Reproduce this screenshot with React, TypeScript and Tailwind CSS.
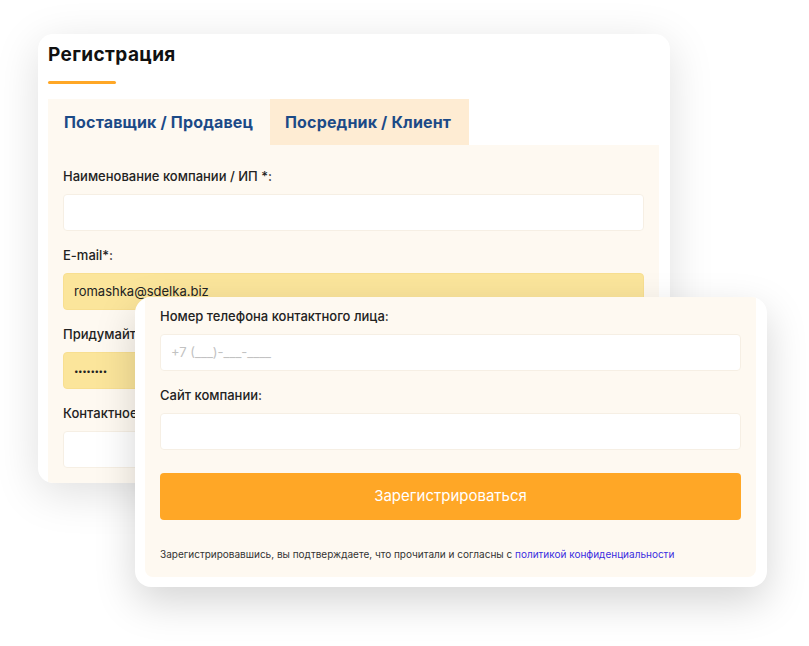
const font = { fontFamily: "Inter, 'Open Sans', sans-serif" };

const Field = ({ label, value, tone = "white", muted = false, dots = false }: { label: string; value?: string; tone?: "white" | "yellow"; muted?: boolean; dots?: boolean }) => (
  <div className="flex flex-col">
    <label className="h-4 text-[13px] leading-4 font-medium text-[#222]">{label}</label>
    <div
      className={
        "mt-[10px] h-[37px] rounded-[4px] border flex items-center px-[10px] " +
        (dots ? "text-[8px] tracking-[-0.05em] " : "text-[13px] ") +
        (tone === "yellow" ? "bg-[#fbe59b] border-[#f8df91]" : "bg-white border-[#f6efe4]") +
        (muted ? " text-[#c2c2c2]" : " text-[#222]")
      }
    >
      {value}
    </div>
  </div>
);

const BackCard = () => (
  <div className="ml-[38px] mt-[34px] w-[632px] h-[449px] bg-white rounded-[15px] overflow-hidden shadow-[0_10px_45px_rgba(0,0,0,0.13)] pl-[10px] pr-[11px] flex flex-col">
    <h2 className="mt-[10px] h-[22px] text-[19px] leading-[22px] tracking-[0.02em] font-bold text-[#111]">Регистрация</h2>
    <div className="mt-[15px] w-[68px] h-[3px] bg-[#ffa726] rounded-full" />
    <div className="mt-[15px] flex">
      <div className="w-[222px] h-[46px] bg-[#fef9f1] pl-4 flex items-center text-[16px] tracking-[0.01em] font-bold text-[#1c4a87]">
        Поставщик / Продавец
      </div>
      <div className="w-[199px] h-[46px] bg-[#feecd3] pl-[15px] flex items-center text-[16px] tracking-[0.01em] font-bold text-[#1c4a87]">
        Посредник / Клиент
      </div>
    </div>
    <div className="flex-1 bg-[#fef9f1] px-[15px] pt-[23px] flex flex-col gap-4">
      <Field label="Наименование компании / ИП *:" />
      <Field label="E-mail*:" value="romashka@sdelka.biz" tone="yellow" />
      <Field label="Придумайте пароль*:" value="••••••••" tone="yellow" dots />
      <Field label="Контактное лицо*:" />
    </div>
  </div>
);

const FrontCard = () => (
  <div className="absolute left-[135px] top-[297px] w-[632px] h-[290px] bg-white rounded-[16px] overflow-hidden shadow-[0_15px_40px_rgba(0,0,0,0.17)] pl-[10px] pr-[11px] pb-[10px] flex">
    <div className="flex-1 bg-[#fef9f1] rounded-b-[8px] px-[15px] pt-[11px] flex flex-col">
      <div className="flex flex-col gap-4">
        <Field label="Номер телефона контактного лица:" value="+7 (___)-___-____" muted />
        <Field label="Сайт компании:" />
      </div>
      <button className="mt-[23px] h-[47px] rounded-[4px] bg-[#ffa726] text-white text-[15px] flex items-center justify-center">
        Зарегистрироваться
      </button>
      <p className="mt-[28px] text-[10px] leading-3 text-[#333]">
        Зарегистрировавшись, вы подтверждаете, что прочитали и согласны с{" "}
        <span className="text-[#3a2ee0]">политикой конфиденциальности</span>
      </p>
    </div>
  </div>
);

export default function App() {
  return (
    <div className="relative w-[809px] h-[646px] bg-white overflow-hidden" style={font}>
      <BackCard />
      <FrontCard />
    </div>
  );
}
